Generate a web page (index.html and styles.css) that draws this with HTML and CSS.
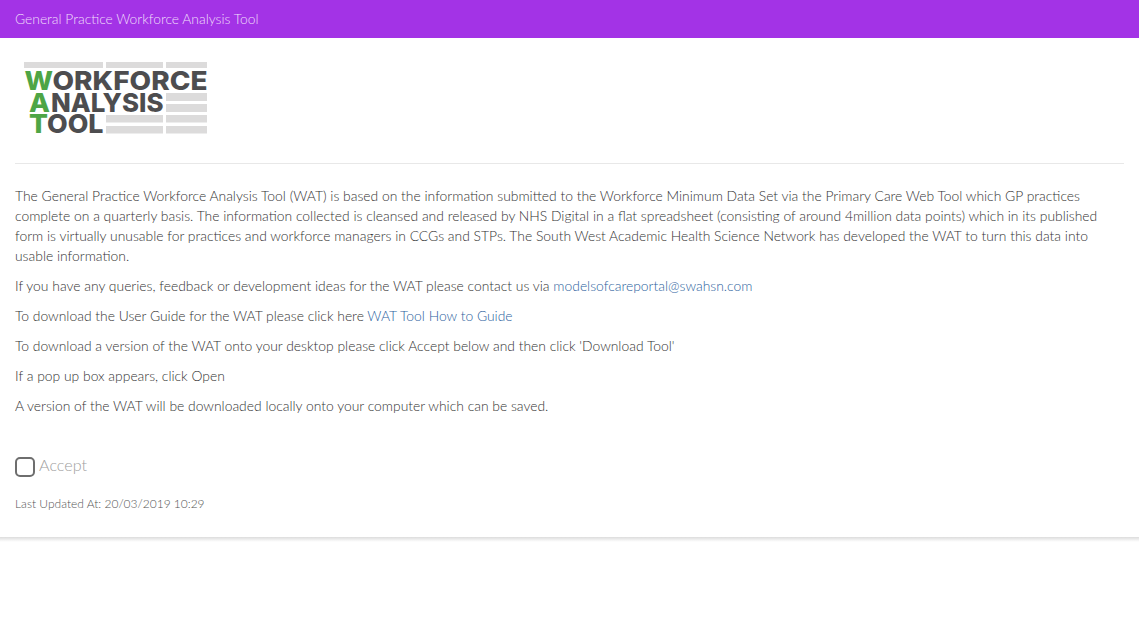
FILE: index.html
```html
<!DOCTYPE html>
<html lang="en">
<head>
<meta charset="utf-8">
<title>General Practice Workforce Analysis Tool</title>
<link rel="stylesheet" href="styles.css">
</head>
<body>
<header class="topbar">General Practice Workforce Analysis Tool</header>
<main class="card">
  <div class="logo-wrap">
    <svg class="logo" width="200" height="90" viewBox="0 0 200 90" role="img" aria-label="Workforce Analysis Tool">
      <g fill="#dcdbdb">
        <rect x="9" y="9" width="79" height="6"/>
        <rect x="91" y="9" width="57" height="6"/>
        <rect x="151" y="9" width="41" height="6"/>
        <rect x="151" y="40" width="41" height="8"/>
        <rect x="151" y="51" width="41" height="8"/>
        <rect x="91" y="62" width="57" height="7.500"/>
        <rect x="151" y="62" width="41" height="7.500"/>
        <rect x="91" y="73" width="57" height="7.500"/>
        <rect x="151" y="73" width="41" height="7.500"/>
      </g>
      <g class="logo-text">
        <text class="logo-green" x="9.500" y="37" textLength="28.500" lengthAdjust="spacingAndGlyphs">W</text>
        <text x="37.500" y="37" textLength="155" lengthAdjust="spacingAndGlyphs">ORKFORCE</text>
        <text class="logo-green" x="14" y="59" textLength="21" lengthAdjust="spacingAndGlyphs">A</text>
        <text x="36" y="59" textLength="112.500" lengthAdjust="spacingAndGlyphs">NALYSIS</text>
        <text class="logo-green" x="14" y="80" textLength="19" lengthAdjust="spacingAndGlyphs">T</text>
        <text x="32" y="80" textLength="56.500" lengthAdjust="spacingAndGlyphs">OOL</text>
      </g>
    </svg>
  </div>
  <hr class="rule">
  <div class="copy">
    <p>The General Practice Workforce Analysis Tool (WAT) is based on the information submitted to the Workforce Minimum Data Set via the Primary Care Web Tool which GP practices complete on a quarterly basis. The information collected is cleansed and released by NHS Digital in a flat spreadsheet (consisting of around 4million data points) which in its published form is virtually unusable for practices and workforce managers in CCGs and STPs. The South West Academic Health Science Network has developed the WAT to turn this data into usable information.</p>
    <p>If you have any queries, feedback or development ideas for the WAT please contact us via <a href="#">modelsofcareportal@swahsn.com</a></p>
    <p>To download the User Guide for the WAT please click here <a href="#">WAT Tool How to Guide</a></p>
    <p>To download a version of the WAT onto your desktop please click Accept below and then click 'Download Tool'</p>
    <p>If a pop up box appears, click Open</p>
    <p>A version of the WAT will be downloaded locally onto your computer which can be saved.</p>
  </div>
  <label class="accept"><span class="box"></span><span class="accept-label">Accept</span></label>
  <p class="updated">Last Updated At: 20/03/2019 10:29</p>
</main>
<div class="card-edge"></div>
</body>
</html>
```
FILE: styles.css
```css
html, body {
  margin: 0;
  padding: 0;
  background: #fff;
}
body {
  font-family: Lato, "Open Sans", sans-serif;
  font-weight: 300;
  font-size: 13.88px;
  line-height: 20px;
  color: #333;
}
.topbar {
  height: 38px;
  box-sizing: border-box;
  padding: 9px 15px;
  background: #a333e6;
  color: #f0dffa;
  font-size: 13.83px;
}
.card {
  height: 499px;
  box-sizing: border-box;
  padding: 15px 15px 0;
  background: #fff;
}
.card-edge {
  height: 5px;
  background: linear-gradient(to bottom, #dcdcdc, #f2f2f2 60%, #fff);
}
.logo-wrap {
  height: 90px;
}
.logo {
  display: block;
}
.logo-text {
  font-family: Inter, "Liberation Sans", sans-serif;
  font-weight: 800;
  font-size: 26px;
  fill: #4d4d4f;
}
.logo-text .logo-green {
  fill: #4ea545;
}
.rule {
  margin: 20px 0 22px;
  border: 0;
  border-top: 1px solid #e8e8e8;
}
.copy p {
  margin: 0 0 10px;
}
a {
  color: #2c5f9e;
  text-decoration: none;
}
.accept {
  display: flex;
  align-items: flex-start;
  gap: 4px;
  margin-top: 39px;
  height: 24px;
  color: #a0a0a0;
  font-size: 16.200px;
  line-height: 20px;
}
.box {
  width: 20px;
  height: 20px;
  margin-top: 2px;
  box-sizing: border-box;
  border: 2px solid #6e6e6e;
  border-radius: 5px;
}
.updated {
  margin: 17px 0 0;
  font-size: 12px;
  line-height: 16px;
  color: #555;
}
```
